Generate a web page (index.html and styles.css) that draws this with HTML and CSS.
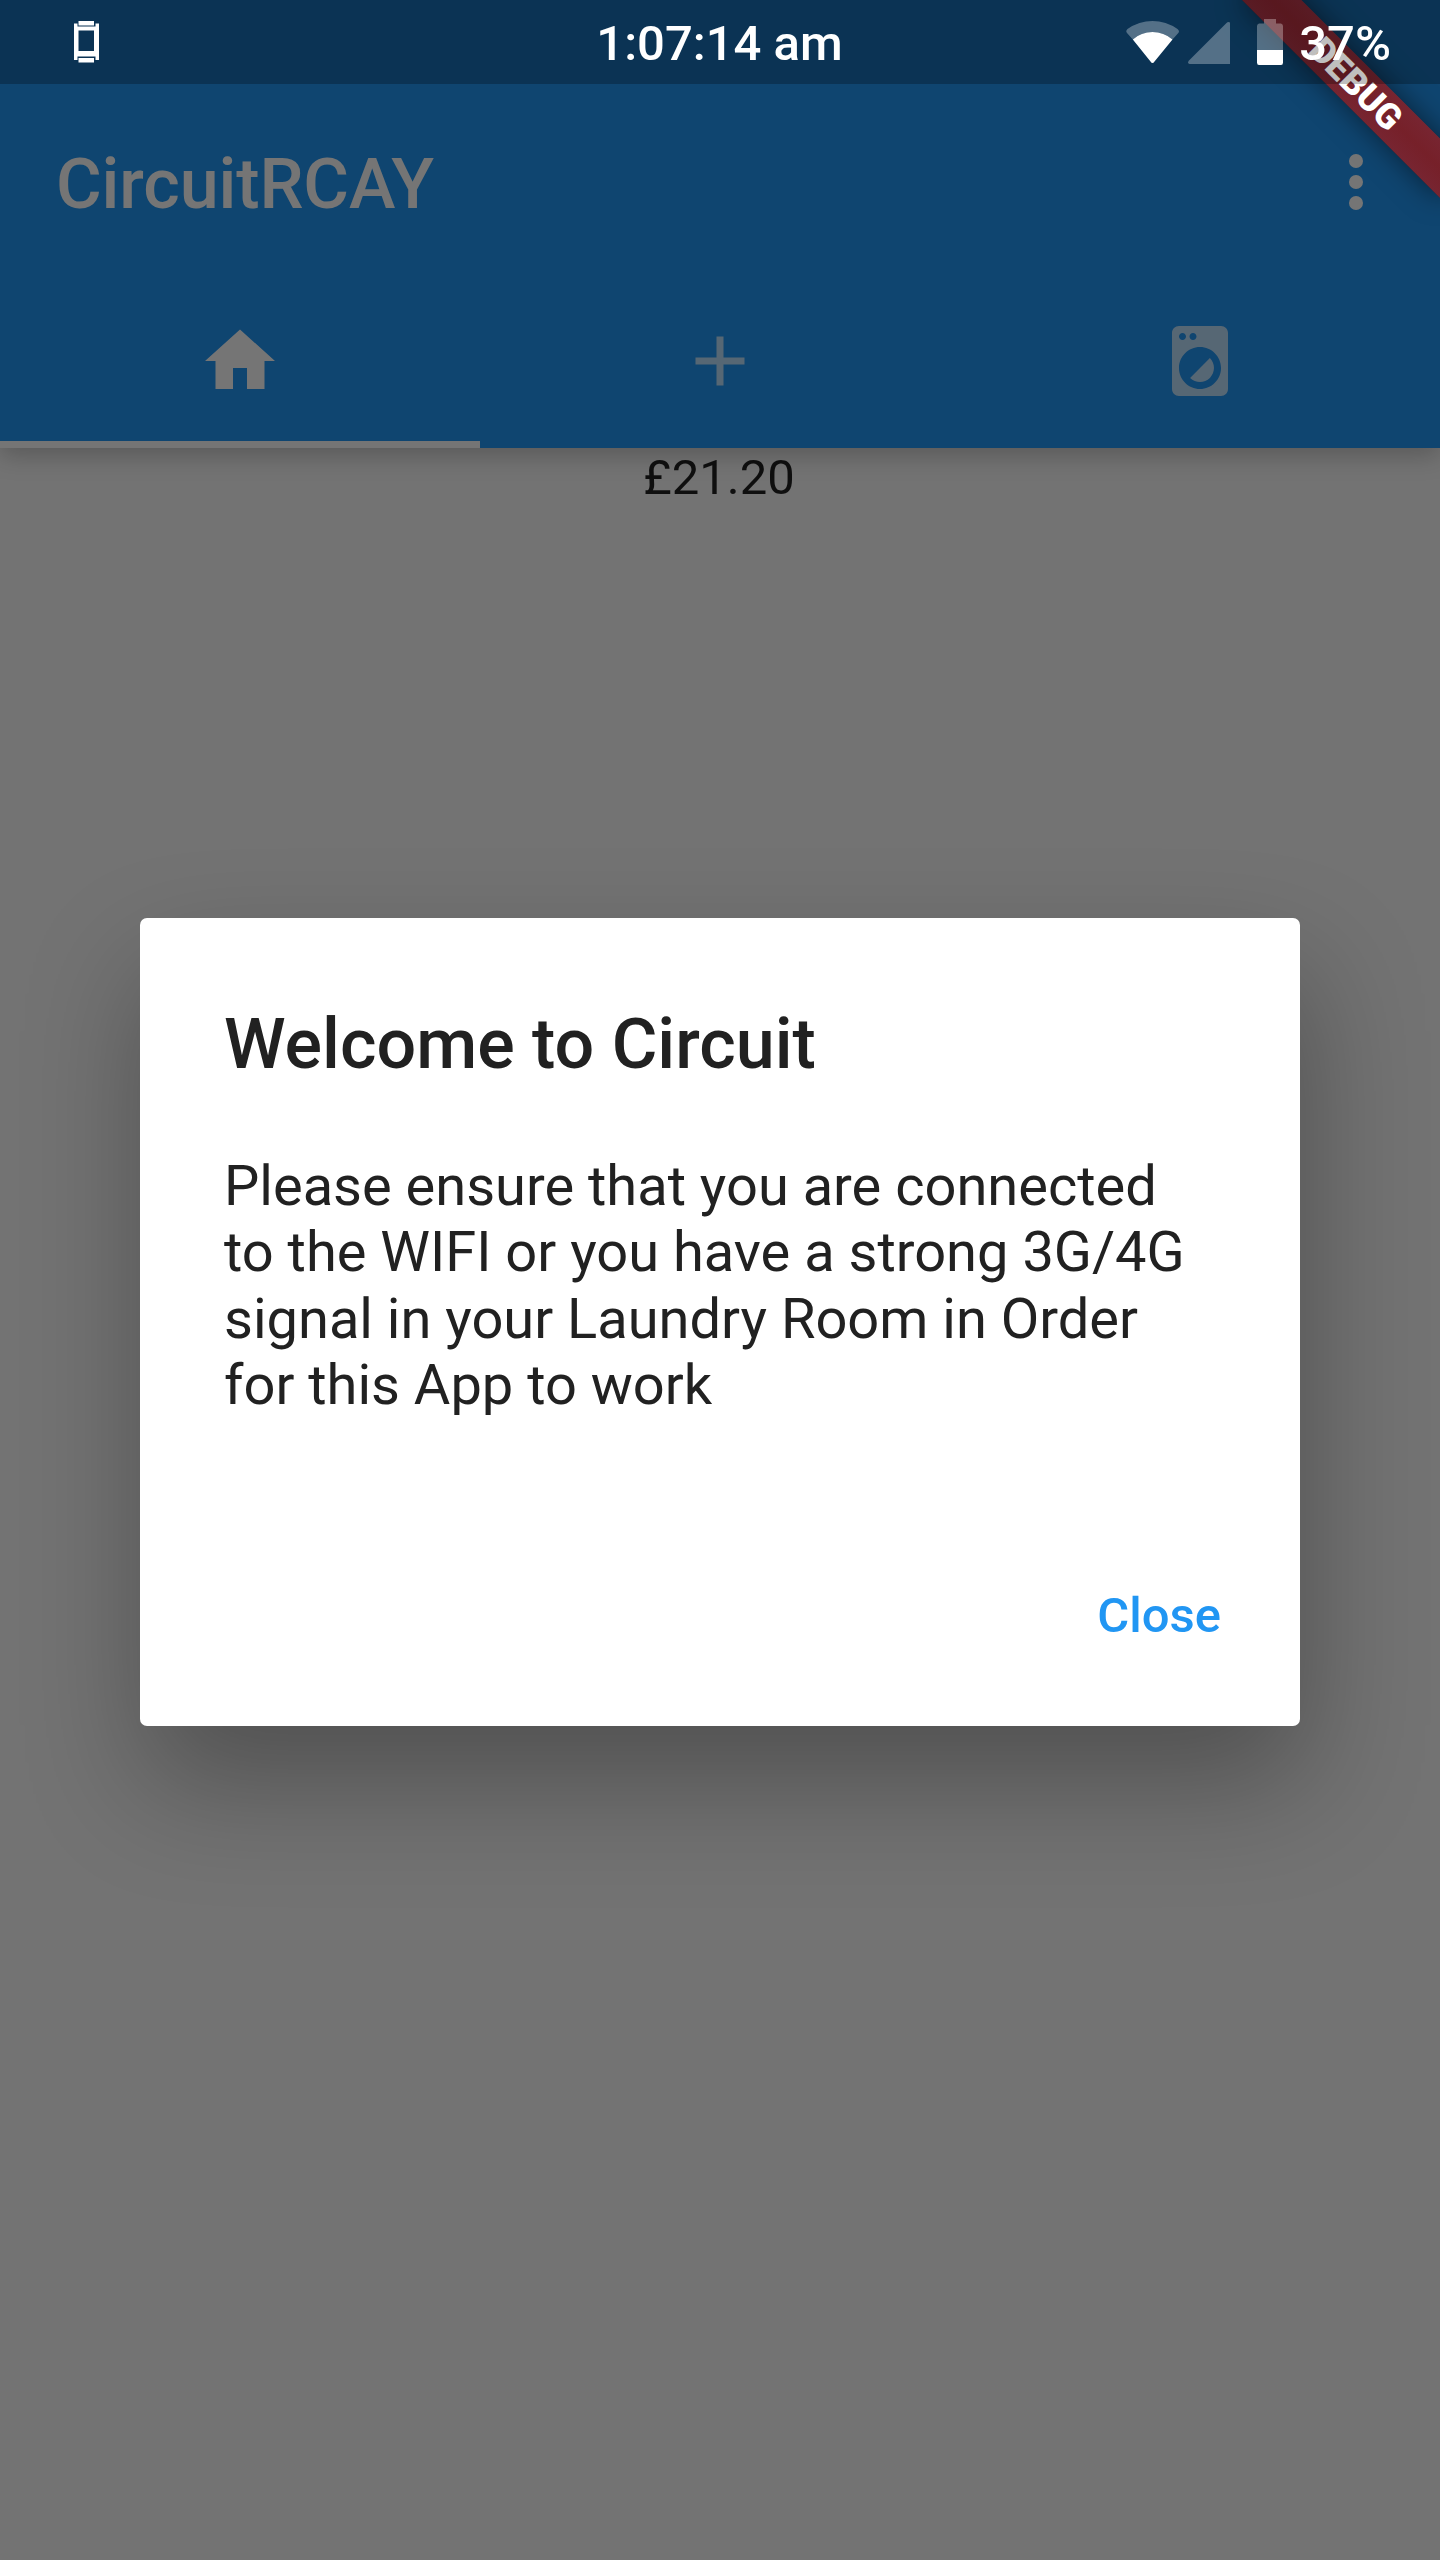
FILE: index.html
```html
<!DOCTYPE html>
<html lang="en">
<head>
<meta charset="utf-8">
<title>CircuitRCAY</title>
<link rel="stylesheet" href="styles.css">
</head>
<body>
<div class="screen">
  <div class="app">
    <header class="appbar">
      <div class="toolbar">
        <h1 class="app-title">CircuitRCAY</h1>
        <svg class="icon" viewBox="0 0 24 24"><circle cx="12" cy="6" r="2"/><circle cx="12" cy="12" r="2"/><circle cx="12" cy="18" r="2"/></svg>
      </div>
      <nav class="tabs">
        <div class="tab tab-active">
          <svg class="icon" viewBox="0 0 24 24"><path d="M10 20v-6h4v6h5v-8h3L12 3 2 12h3v8z"/></svg>
        </div>
        <div class="tab">
          <svg class="icon" viewBox="0 0 24 24"><path d="M19 13h-6v6h-2v-6H5v-2h6V5h2v6h6v2z"/></svg>
        </div>
        <div class="tab">
          <svg class="icon" viewBox="0 0 24 24"><path d="M9.17 16.83c1.56 1.56 4.1 1.56 5.66 0 1.56-1.56 1.56-4.1 0-5.66l-5.66 5.66zM18 2.01L6 2c-1.11 0-2 .89-2 2v16c0 1.11.89 2 2 2h12c1.11 0 2-.89 2-2V4c0-1.11-.89-1.99-2-1.99zM10 4c.55 0 1 .45 1 1s-.45 1-1 1-1-.45-1-1 .45-1 1-1zM7 4c.55 0 1 .45 1 1s-.45 1-1 1-1-.45-1-1 .45-1 1-1zm5 16c-3.31 0-6-2.69-6-6s2.69-6 6-6 6 2.69 6 6-2.69 6-6 6z"/></svg>
        </div>
      </nav>
    </header>
    <main class="balance">£21.20</main>
  </div>

  <div class="barrier">
    <section class="dialog">
      <h2 class="dialog-title">Welcome to Circuit</h2>
      <p class="dialog-text">Please ensure that you are connected<br>to the WIFI or you have a strong 3G/4G<br>signal in your Laundry Room in Order<br>for this App to work</p>
      <div class="dialog-actions"><button class="close">Close</button></div>
    </section>
  </div>

  <div class="banner">DEBUG</div>

  <div class="statusbar">
    <svg class="status-phone" viewBox="0 0 26 42" width="26" height="42"><path fill-rule="evenodd" d="M0 2.5h3.5v3h18v-3H25V39h-3.500v-3.500h-18V39H0zM4.500 9.500v20.500h15.500V9.500zM4.500 0H20v4.500H4.500zM4.500 37H20v4.500H4.500z"/></svg>
    <span class="clock">1:07:14 am</span>
    <div class="status-right">
      <svg class="wifi" viewBox="0 0 54 43" width="54" height="43"><path class="dim" d="M1 12Q-.7 10 1.500 8Q13 0 26.500 0T51.500 8Q54 10 52.300 12L46.500 18.500Q38 11 26.500 11T6.800 18.500z"/><path d="M6.800 18.500Q15 11 26.500 11T46.500 18.500L28.500 40.500Q26.500 43.500 24.500 40.500z"/></svg>
      <svg class="signal" viewBox="0 0 42 42" width="42" height="42"><path class="dim" d="M1 38.500L38.500 1Q40-.5 42 0.500V42H1.500Q-1 41 1 38.500z"/></svg>
      <svg class="battery" viewBox="0 0 26 46" width="26" height="46"><path class="dim" d="M7 0H19V4.500H24Q26 5 26 7V31H0V7Q0 5 2 4.500H7z"/><path d="M0 31H26V43.500Q26 46 24 46H2Q0 46 0 43.500z"/></svg>
      <span class="percent">37%</span>
    </div>
  </div>
</div>
</body>
</html>
```

FILE: styles.css
```css
* { box-sizing: border-box; }

body {
  margin: 0;
  font-family: Roboto, "Noto Sans", sans-serif;
}

h1, h2, p { margin: 0; }

.screen {
  position: relative;
  width: 1440px;
  height: 2560px;
  overflow: hidden;
}

.app {
  height: 100%;
  background: #fafafa;
}

.appbar {
  height: 448px;
  padding-top: 84px;
  background: #2196f3;
  color: #fff;
  box-shadow: 0 7px 24px rgba(0, 0, 0, .23);
}

.toolbar {
  display: flex;
  align-items: center;
  justify-content: space-between;
  height: 196px;
  padding: 0 42px 0 56px;
}

.app-title {
  padding-top: 3px;
  font-size: 70px;
  font-weight: 500;
  line-height: 82px;
  letter-spacing: -.12px;
}

.icon {
  display: block;
  width: 84px;
  height: 84px;
  fill: currentColor;
}

.tabs {
  display: grid;
  grid-template-columns: repeat(3, 1fr);
  height: 168px;
}

.tab {
  display: flex;
  align-items: center;
  justify-content: center;
  border-bottom: 7px solid transparent;
  color: rgba(255, 255, 255, .7);
}

.tab-active {
  border-color: #fff;
  color: #fff;
}

.balance {
  padding: 1px 2px 0 0;
  font-size: 49px;
  line-height: 57px;
  text-align: center;
  color: rgba(0, 0, 0, .87);
}

.barrier {
  position: absolute;
  inset: 0;
  display: flex;
  align-items: center;
  justify-content: center;
  padding-top: 84px;
  background: rgba(0, 0, 0, .54);
}

.dialog {
  display: flex;
  flex-direction: column;
  width: 1160px;
  height: 808px;
  padding: 84px 55px 28px 84px;
  border-radius: 7px;
  background: #fff;
  color: #212121;
  box-shadow: 5px 56px 120px rgba(0, 0, 0, .3);
}

.dialog-title {
  font-size: 70px;
  font-weight: 500;
  line-height: 84px;
}

.dialog-text {
  margin-top: 67px;
  font-size: 56px;
  line-height: 66.400px;
  white-space: nowrap;
}

.dialog-actions {
  display: flex;
  justify-content: flex-end;
  margin-top: auto;
  padding-bottom: 20px;
}

.close {
  height: 126px;
  padding: 0 24px;
  border: 0;
  background: none;
  font: 500 49px/57px Roboto, "Noto Sans", sans-serif;
  color: #2196f3;
}

/* Corner ribbon, turned about the top right corner of the screen */
.banner {
  position: absolute;
  top: 98px;
  left: 1300px;
  width: 280px;
  height: 42px;
  transform-origin: 140px -98px;
  transform: rotate(45deg);
  background:
    linear-gradient(rgba(183, 28, 28, .627), rgba(183, 28, 28, .627)),
    linear-gradient(rgba(0, 0, 0, .25), rgba(0, 0, 0, .43), rgba(0, 0, 0, .25));
  box-shadow: 0 0 28px rgba(0, 0, 0, .5);
  font-size: 35.700px;
  font-weight: 900;
  line-height: 42px;
  text-align: center;
  color: #fff;
}

.statusbar {
  position: absolute;
  inset: 0 0 auto;
  display: grid;
  grid-template-columns: 1fr auto 1fr;
  align-items: center;
  height: 84px;
  padding: 0 49px 0 74px;
  background: rgba(0, 0, 0, .25);
  color: #fff;
  fill: #fff;
  font-size: 49px;
  font-weight: 500;
  line-height: 57px;
}

.statusbar .dim { opacity: .3; }

.clock { padding: 3px 26px 0 0; }

.status-right {
  display: flex;
  align-items: center;
  justify-content: flex-end;
}

.signal {
  margin: 2px 27px 0 8px;
}

.battery { margin-right: 16px; }

.percent { padding-top: 3px; }
```
